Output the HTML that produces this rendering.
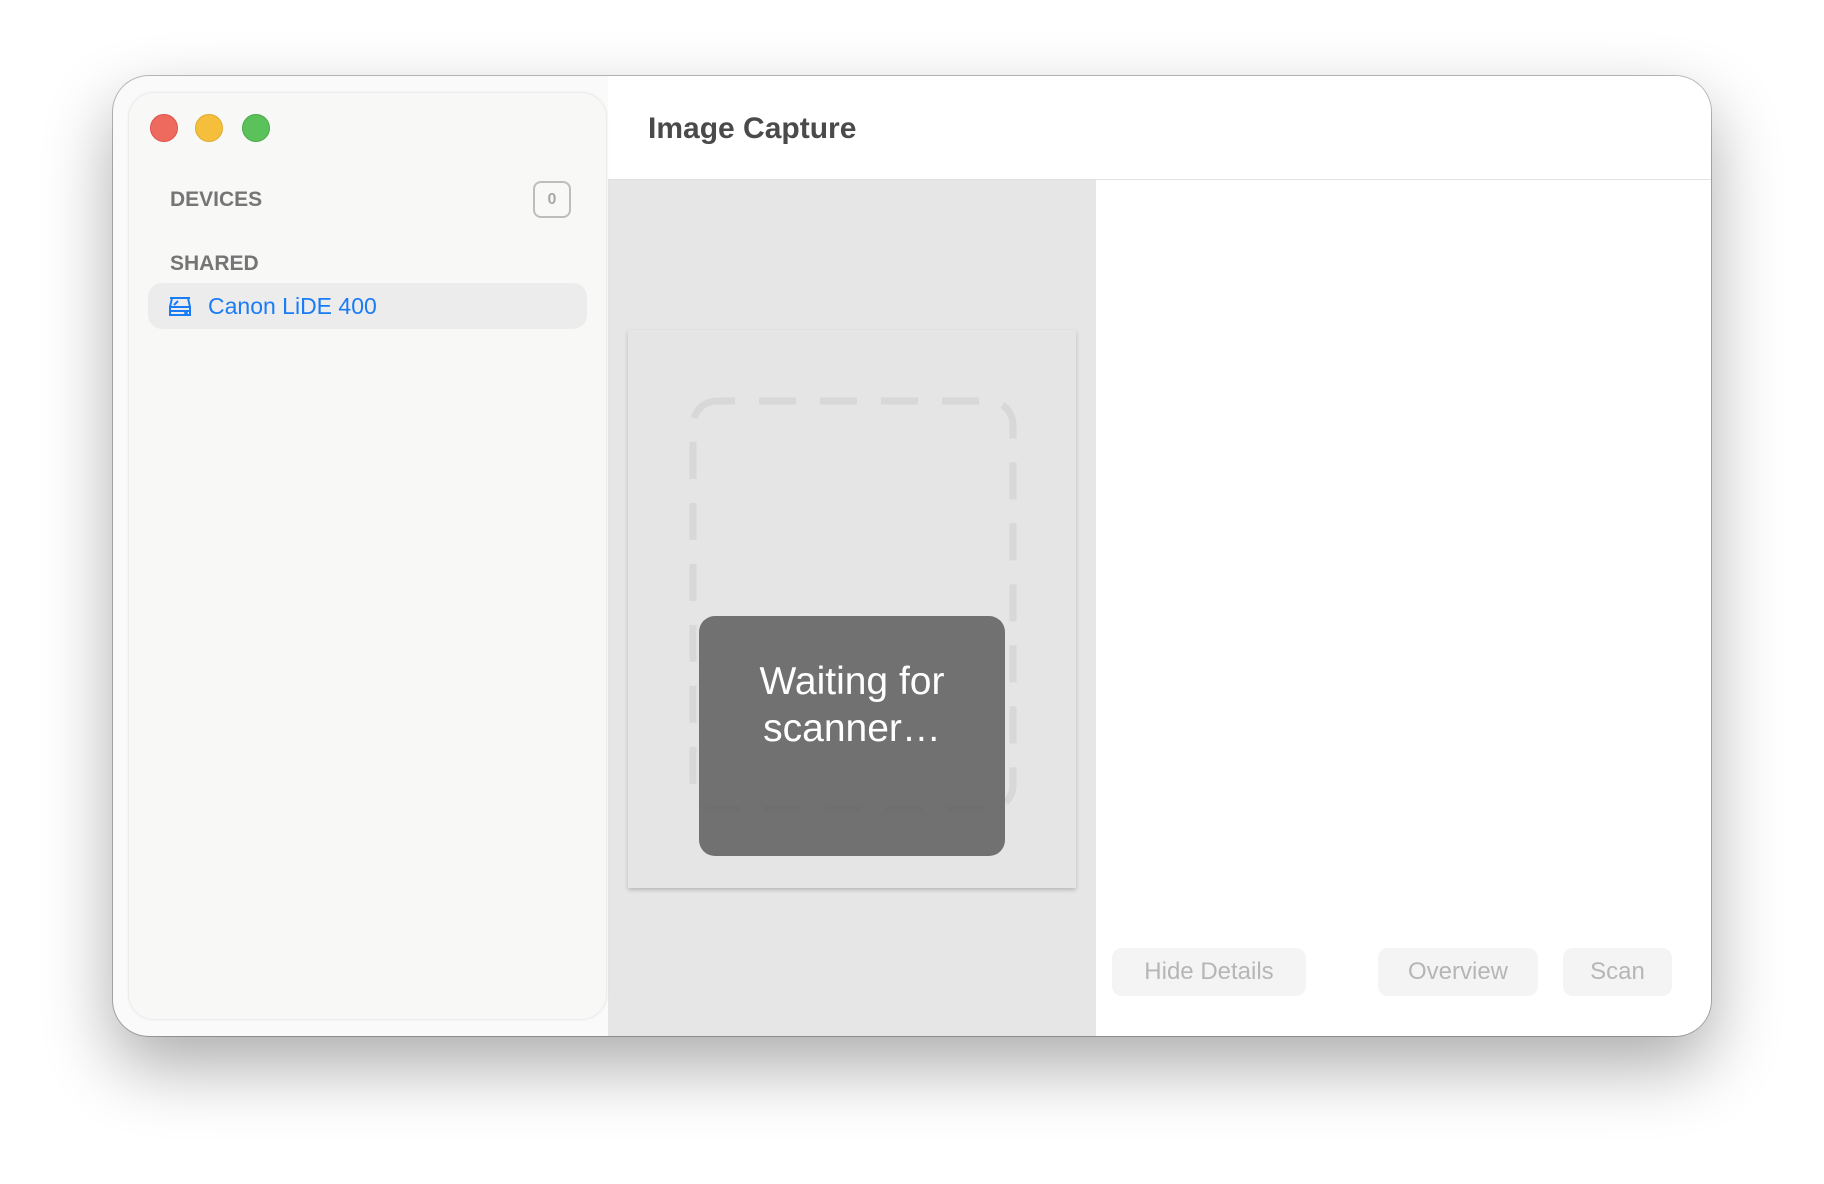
<!DOCTYPE html>
<html><head><style>
*{margin:0;padding:0;box-sizing:border-box}
body{width:1824px;height:1184px;background:#fff;position:relative;overflow:hidden;font-family:"Liberation Sans",sans-serif}
.win{position:absolute;left:113px;top:76px;width:1598px;height:960px;border-radius:36px;background:#fafafa;overflow:hidden;box-shadow:0 30px 70px rgba(0,0,0,.33),0 0 0 1px rgba(0,0,0,.25)}
.side{position:absolute;left:15px;top:16px;width:479px;height:928px;border-radius:26px;background:#f8f8f7;border:1px solid #ececec;box-shadow:0 0 3px rgba(0,0,0,.05)}
.tl{position:absolute;top:114px;width:28px;height:28px;border-radius:50%}
.main{position:absolute;left:495px;top:0;right:0;bottom:0;background:#fff}
.gray{position:absolute;left:495px;top:103px;width:488px;height:857px;background:#e6e6e6;border-top:1px solid #e0e0e0}
.hline{position:absolute;left:983px;top:103px;right:0;height:1px;background:#e3e3e3}
.paper{position:absolute;left:628px;top:330px;width:448px;height:558px;background:#e5e5e5;box-shadow:0 2px 4px rgba(0,0,0,.2)}
.dark{position:absolute;left:699px;top:616px;width:306px;height:240px;border-radius:16px;background:rgba(100,100,100,.9);color:#fff;font-size:39px;text-align:center;line-height:47px;padding-top:42px}
.lbl{position:absolute;left:170px;font-size:21px;font-weight:bold;color:#757575}
.btn{position:absolute;top:948px;height:48px;border-radius:10px;background:#f4f4f4;color:#b6b6b6;font-size:24px;text-align:center;line-height:48px}
</style></head><body>
<div class="win">
 <div class="main"></div>
 <div class="gray"></div>
 <div class="hline"></div>
 <div class="side"></div>
</div>
<div class="tl" style="left:150px;background:#ee6a5f;border:1px solid #e0524a"></div>
<div class="tl" style="left:195px;background:#f5bf3c;border:1px solid #e1a82f"></div>
<div class="tl" style="left:242px;background:#5bc15b;border:1px solid #4aab4a"></div>
<div style="position:absolute;left:648px;top:112px;font-size:30px;font-weight:bold;color:#4a4a4a">Image Capture</div>
<div class="lbl" style="top:188px">DEVICES</div>
<div style="position:absolute;left:533px;top:181px;width:38px;height:37px;border:2px solid #bdbdbd;border-radius:8px;color:#a8a8a8;font-size:16px;font-weight:bold;text-align:center;line-height:33px">0</div>
<div class="lbl" style="top:252px">SHARED</div>
<div style="position:absolute;left:148px;top:283px;width:439px;height:46px;border-radius:14px;background:#ececec"></div>
<svg style="position:absolute;left:167px;top:296px" width="26" height="22" viewBox="0 0 26 22" fill="none" stroke="#1a7cf5" stroke-width="2">
<path d="M3 2h20M5 2l-2 9M21 2l2 9M3 11h20v8H3z"/><path d="M3 15h20"/><path d="M7 9l4-4"/><circle cx="19" cy="17" r=".8" fill="#1a7cf5"/></svg>
<div style="position:absolute;left:208px;top:293px;font-size:23px;color:#1a7cf5">Canon LiDE 400</div>
<div class="paper"></div>
<svg style="position:absolute;left:686px;top:394px" width="336" height="424">
<rect x="7" y="7" width="320" height="408" rx="24" fill="none" stroke="#d8d8d8" stroke-width="7" stroke-dasharray="37 24" stroke-dashoffset="19"/></svg>
<div class="dark">Waiting for<br>scanner…</div>
<div class="btn" style="left:1112px;width:194px">Hide Details</div>
<div class="btn" style="left:1378px;width:160px">Overview</div>
<div class="btn" style="left:1563px;width:109px">Scan</div>
</body></html>
